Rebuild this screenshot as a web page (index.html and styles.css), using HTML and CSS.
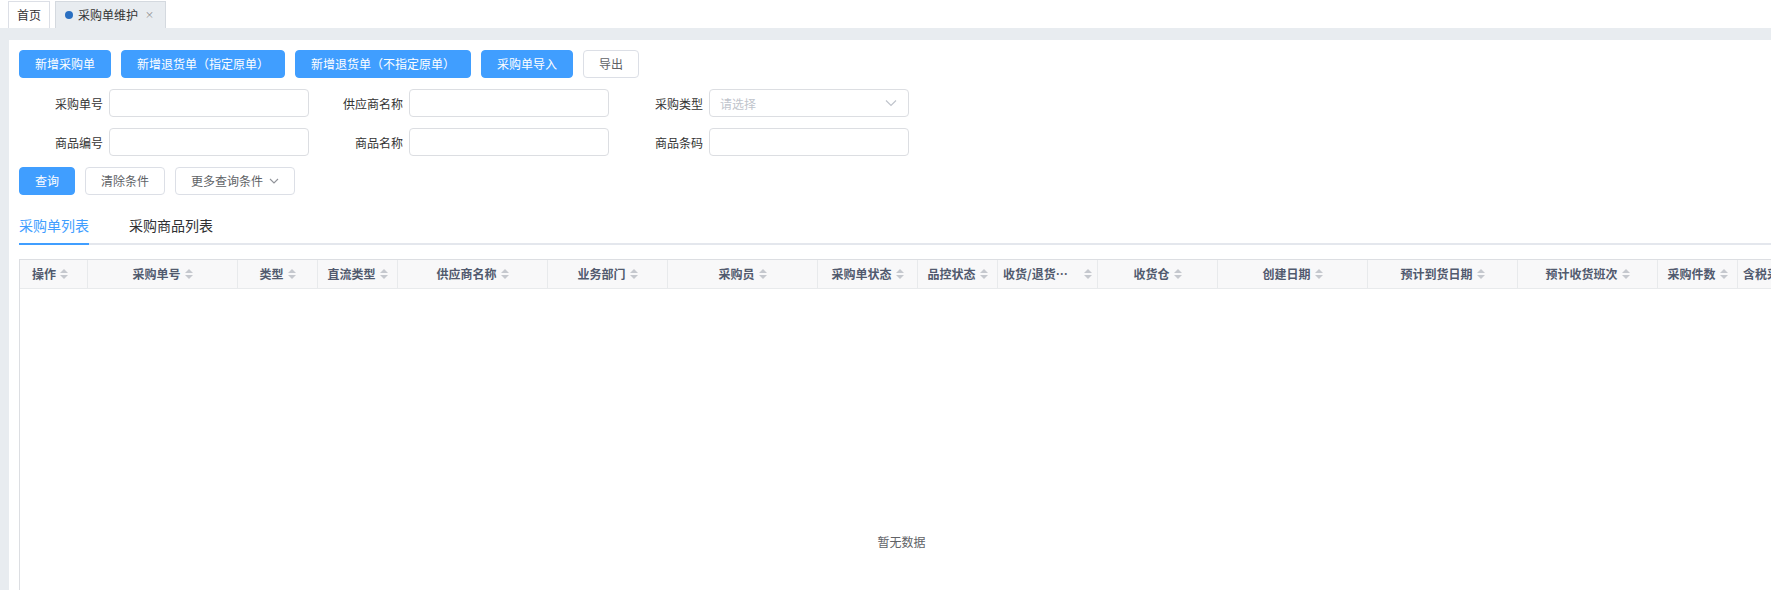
FILE: index.html
```html
<!DOCTYPE html>
<html lang="zh-CN">
<head>
<meta charset="utf-8">
<title>采购单维护</title>
<link rel="stylesheet" href="styles.css">
</head>
<body>
<div class="app">
  <div class="tagbar">
    <div class="tag tag-home">首页</div>
    <div class="tag tag-active"><span class="tag-dot"></span>采购单维护<span class="tag-close">×</span></div>
  </div>
  <div class="main">
    <div class="content">
      <div class="btn-row">
        <button class="btn btn-primary">新增采购单</button>
        <button class="btn btn-primary">新增退货单（指定原单）</button>
        <button class="btn btn-primary">新增退货单（不指定原单）</button>
        <button class="btn btn-primary">采购单导入</button>
        <button class="btn">导出</button>
      </div>
      <div class="form">
        <div class="form-row">
          <div class="form-item"><label class="form-label">采购单号</label><div class="input"></div></div>
          <div class="form-item"><label class="form-label">供应商名称</label><div class="input"></div></div>
          <div class="form-item"><label class="form-label">采购类型</label><div class="input select"><span class="placeholder">请选择</span>
            <svg class="select-arrow" width="12" height="12" viewBox="0 0 12 12"><path d="M1 3.5 L6 8.5 L11 3.5" fill="none" stroke="#c0c4cc" stroke-width="1.2"/></svg></div></div>
        </div>
        <div class="form-row">
          <div class="form-item"><label class="form-label">商品编号</label><div class="input"></div></div>
          <div class="form-item"><label class="form-label">商品名称</label><div class="input"></div></div>
          <div class="form-item"><label class="form-label">商品条码</label><div class="input"></div></div>
        </div>
      </div>
      <div class="btn-row query-row">
        <button class="btn btn-primary">查询</button>
        <button class="btn">清除条件</button>
        <button class="btn">更多查询条件<svg class="btn-arrow" width="10" height="10" viewBox="0 0 10 10"><path d="M1 3 L5 7 L9 3" fill="none" stroke="#909399" stroke-width="1.1"/></svg></button>
      </div>
      <div class="tabs">
        <div class="tab tab-on">采购单列表</div>
        <div class="tab">采购商品列表</div>
      </div>
      <div class="table">
        <div class="thead">
          <div class="th th-left" style="width:68px"><span class="th-text">操作</span><span class="sort"></span></div>
          <div class="th" style="width:150px"><span class="th-text">采购单号</span><span class="sort"></span></div>
          <div class="th" style="width:80px"><span class="th-text">类型</span><span class="sort"></span></div>
          <div class="th" style="width:80px"><span class="th-text">直流类型</span><span class="sort"></span></div>
          <div class="th" style="width:150px"><span class="th-text">供应商名称</span><span class="sort"></span></div>
          <div class="th" style="width:120px"><span class="th-text">业务部门</span><span class="sort"></span></div>
          <div class="th" style="width:150px"><span class="th-text">采购员</span><span class="sort"></span></div>
          <div class="th" style="width:100px"><span class="th-text">采购单状态</span><span class="sort"></span></div>
          <div class="th" style="width:80px"><span class="th-text">品控状态</span><span class="sort"></span></div>
          <div class="th th-trunc" style="width:100px"><span class="th-text">收货/退货时间</span><span class="sort"></span></div>
          <div class="th" style="width:120px"><span class="th-text">收货仓</span><span class="sort"></span></div>
          <div class="th" style="width:150px"><span class="th-text">创建日期</span><span class="sort"></span></div>
          <div class="th" style="width:150px"><span class="th-text">预计到货日期</span><span class="sort"></span></div>
          <div class="th" style="width:140px"><span class="th-text">预计收货班次</span><span class="sort"></span></div>
          <div class="th" style="width:80px"><span class="th-text">采购件数</span><span class="sort"></span></div>
          <div class="th th-left th-last" style="width:150px"><span class="th-text">含税采购金额（元）</span><span class="sort"></span></div>
        </div>
        <div class="tbody">
          <span class="empty">暂无数据</span>
        </div>
      </div>
    </div>
  </div>
</div>
</body>
</html>
```
FILE: styles.css
```css
* { box-sizing: border-box; }
html, body {
  margin: 0;
  padding: 0;
  overflow: hidden;
  background: #fff;
}
body {
  font-family: "Noto Sans CJK SC", "Noto Sans", "Liberation Sans", sans-serif;
  font-size: 12px;
  color: #333;
  width: 1771px;
  height: 590px;
}
.app {
  width: 1771px;
  height: 590px;
  display: flex;
  flex-direction: column;
  overflow: hidden;
}
.tagbar {
  height: 28px;
  background: #fff;
  display: flex;
  align-items: flex-end;
  padding-left: 8px;
  gap: 5px;
  flex: none;
}
.tag {
  height: 27px;
  border: 1px solid #dcdfe6;
  border-bottom: none;
  display: flex;
  align-items: center;
  font-size: 12px;
  line-height: 16px;
  color: #333;
}
.tag-home {
  width: 42px;
  justify-content: center;
  background: #fff;
}
.tag-active {
  width: 111px;
  background: #e8ecf0;
  border-color: #d4d9df;
  padding-left: 9px;
}
.tag-dot {
  width: 8px;
  height: 8px;
  border-radius: 50%;
  background: #2a6fc1;
  margin-right: 5px;
}
.tag-close {
  margin-left: 7px;
  font-size: 9px;
  color: #888;
}
.main {
  flex: 1;
  background: #e8ecf0;
  padding: 12px 0 0 9px;
  overflow: hidden;
}
.content {
  background: #fff;
  height: 100%;
  padding: 10px 0 0 10px;
  overflow: hidden;
}
.btn-row {
  display: flex;
  gap: 10px;
  height: 28px;
}
.btn {
  height: 28px;
  padding: 0 15px;
  border: 1px solid #dcdfe6;
  border-radius: 4px;
  background: #fff;
  color: #606266;
  font-family: inherit;
  font-size: 12px;
  line-height: 26px;
  display: inline-flex;
  align-items: center;
  white-space: nowrap;
}
.btn-primary {
  background: #409eff;
  border-color: #409eff;
  color: #fff;
}
.btn-arrow {
  margin-left: 6px;
}
.form {
  margin-top: 11px;
  display: flex;
  flex-direction: column;
  gap: 11px;
}
.form-row {
  display: flex;
  gap: 10px;
}
.form-item {
  display: flex;
  align-items: center;
  height: 28px;
}
.form-label {
  width: 90px;
  padding-right: 6px;
  text-align: right;
  font-size: 12px;
  color: #333;
  white-space: nowrap;
}
.input {
  width: 200px;
  height: 28px;
  border: 1px solid #dcdee2;
  border-radius: 4px;
  background: #fff;
}
.select {
  display: flex;
  align-items: center;
  justify-content: space-between;
  padding: 0 11px 0 10px;
}
.placeholder {
  color: #c0c4cc;
  font-size: 12px;
}
.query-row {
  margin-top: 11px;
}
.tabs {
  margin-top: 10px;
  display: flex;
  gap: 40px;
  border-bottom: 2px solid #e4e7ed;
  height: 40px;
}
.tab {
  font-size: 14px;
  line-height: 20px;
  padding-top: 10px;
  height: 40px;
  color: #303133;
  white-space: nowrap;
}
.tab-on {
  color: #409eff;
  border-bottom: 2px solid #409eff;
  margin-bottom: -2px;
  height: 40px;
}
.table {
  margin-top: 14px;
  width: 1764px;
  border: 1px solid #dcdee2;
  border-right: none;
  border-bottom: none;
}
.thead {
  display: flex;
  height: 29px;
  background: #f8f8f9;
  border-bottom: 1px solid #e8eaec;
}
.th {
  flex: none;
  height: 28px;
  border-right: 1px solid #e8eaec;
  display: flex;
  align-items: center;
  justify-content: center;
  padding: 0 5px;
  font-size: 12px;
  font-weight: bold;
  color: #515a6e;
  white-space: nowrap;
  overflow: hidden;
}
.th-left {
  justify-content: flex-start;
  padding-left: 12px;
}
.th-last {
  padding-left: 5px;
}
.th-trunc {
  justify-content: flex-start;
}
.th-trunc .th-text {
  width: 74px;
  overflow: hidden;
  text-overflow: ellipsis;
  margin-right: 8px;
}
.th-text {
  line-height: 16px;
}
.sort {
  flex: none;
  width: 8px;
  height: 10px;
  margin-left: 4px;
  position: relative;
}
.sort::before,
.sort::after {
  content: "";
  position: absolute;
  left: 0;
  border-left: 4px solid transparent;
  border-right: 4px solid transparent;
}
.sort::before {
  top: 0;
  border-bottom: 4px solid #c5c8ce;
}
.sort::after {
  bottom: 0;
  border-top: 4px solid #c5c8ce;
}
.tbody {
  height: 505px;
  display: flex;
  align-items: center;
  justify-content: center;
}
.empty {
  font-size: 12px;
  color: #606266;
}
```
